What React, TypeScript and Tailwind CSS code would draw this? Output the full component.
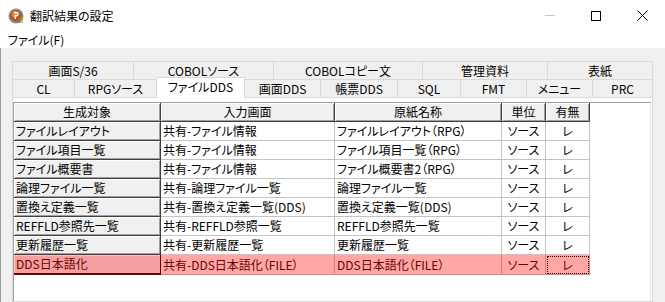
import React from 'react'

type Row = { target: string; input: string; name: string; unit: string; flag: string }

const rows: Row[] = [
  { target: 'ファイルレイアウト', input: '共有-ファイル情報', name: 'ファイルレイアウト（RPG）', unit: 'ソース', flag: 'レ' },
  { target: 'ファイル項目一覧', input: '共有-ファイル情報', name: 'ファイル項目一覧（RPG）', unit: 'ソース', flag: 'レ' },
  { target: 'ファイル概要書', input: '共有-ファイル情報', name: 'ファイル概要書2（RPG）', unit: 'ソース', flag: 'レ' },
  { target: '論理ファイル一覧', input: '共有-論理ファイル一覧', name: '論理ファイル一覧', unit: 'ソース', flag: 'レ' },
  { target: '置換え定義一覧', input: '共有-置換え定義一覧(DDS)', name: '置換え定義一覧(DDS)', unit: 'ソース', flag: 'レ' },
  { target: 'REFFLD参照先一覧', input: '共有-REFFLD参照一覧', name: 'REFFLD参照先一覧', unit: 'ソース', flag: 'レ' },
  { target: '更新履歴一覧', input: '共有-更新履歴一覧', name: '更新履歴一覧', unit: 'ソース', flag: 'レ' },
]

const selected: Row = { target: 'DDS日本語化', input: '共有-DDS日本語化（FILE）', name: 'DDS日本語化（FILE）', unit: 'ソース', flag: 'レ' }

// top row of tabs, widths measured from the dialog
const topTabs = [
  { label: '画面S/36', w: 'w-[121px]' },
  { label: 'COBOLソース', w: 'w-[140px]' },
  { label: 'COBOLコピー文', w: 'w-[149px]' },
  { label: '管理資料', w: 'w-[125px]' },
  { label: '表紙', w: 'w-[106px]' },
]

const bottomTabs = [
  { label: 'CL', w: 'w-[62px]' },
  { label: 'RPGソース', w: 'w-[82px]' },
  { label: 'ファイルDDS', w: 'w-[89px]', active: true },
  { label: '画面DDS', w: 'w-[75px]' },
  { label: '帳票DDS', w: 'w-[77px]' },
  { label: 'SQL', w: 'w-[63px]' },
  { label: 'FMT', w: 'w-[66px]' },
  { label: 'メニュー', w: 'w-[66px]' },
  { label: 'PRC', w: 'w-[61px]' },
]

const headCell = 'flex items-center justify-center bg-[#f0f0f0] border-r border-b border-[#404040] shadow-[inset_1px_1px_0_#ffffff,inset_-1px_-1px_0_#a0a0a0]'
const rowHead = 'flex items-center pl-[2px] bg-[#f0f0f0] border-r border-b border-[#404040] shadow-[inset_1px_1px_0_#ffffff,inset_-1px_-1px_0_#a0a0a0]'
const dataCell = 'flex items-center border-r border-b border-[#c4c4c4] bg-white'

function AppIcon() {
  return (
    <svg width="16" height="16" viewBox="0 0 16 16">
      <circle cx="8" cy="8" r="7.5" fill="#8a8a8a" />
      <circle cx="8" cy="8" r="5.8" fill="#b5562a" />
      <circle cx="7" cy="6.5" r="3" fill="#d98a4a" />
      <path d="M6 4.5h2.5a1.6 1.6 0 0 1 0 3.2H7.2V11" stroke="#fff" strokeWidth="1.3" fill="none" />
      <rect x="10" y="10" width="2.5" height="2.5" fill="#e84c1c" />
      <rect x="12.5" y="10" width="2.5" height="2.5" fill="#7cbb00" />
      <rect x="10" y="12.5" width="2.5" height="2.5" fill="#00a1f1" />
      <rect x="12.5" y="12.5" width="2.5" height="2.5" fill="#ffbb00" />
    </svg>
  )
}

export default function App() {
  return (
    <div className="w-[665px] h-[302px] overflow-hidden bg-white flex flex-col text-[12px] text-black [font-family:'Noto_Sans_CJK_JP','Noto_Sans',sans-serif] [font-feature-settings:'palt'] leading-none">
      {/* title bar */}
      <div className="h-[31px] flex items-center shrink-0">
        <div className="ml-[8px] mt-[1px]">
          <AppIcon />
        </div>
        <span className="ml-[6px]">翻訳結果の設定</span>
        <div className="ml-auto flex h-full">
          <div className="w-[46px] flex items-center justify-center">
            <div className="w-[10px] h-px bg-[#c8c8c8]" />
          </div>
          <div className="w-[46px] flex items-center justify-center">
            <div className="w-[10px] h-[10px] border border-black" />
          </div>
          <div className="w-[46px] flex items-center justify-center">
            <svg width="11" height="11" viewBox="0 0 11 11">
              <path d="M0.5 0.5L10.5 10.5M10.5 0.5L0.5 10.5" stroke="#000" strokeWidth="1" />
            </svg>
          </div>
        </div>
      </div>

      {/* menu bar */}
      <div className="h-[17px] flex items-center shrink-0 pl-[8px]">
        <span>ファイル(F)</span>
      </div>

      {/* client area */}
      <div className="flex-1 bg-[#f0f0f0] border-l border-[#9a9a9a] pt-[13px] pl-[11px] flex flex-col min-h-0">
        <div className="w-[641px] flex flex-col flex-1 min-h-0">
          {/* tab rows */}
          <div className="flex h-[18px]">
            {topTabs.map((t, i) => (
              <div
                key={t.label}
                className={`${t.w} h-full flex items-center justify-center border-t border-l border-[#d9d9d9] ${i === topTabs.length - 1 ? 'border-r' : ''}`}
              >
                {t.label}
              </div>
            ))}
          </div>
          <div className="flex h-[18px] items-end relative z-10">
            {bottomTabs.map((t, i) =>
              t.active ? (
                <div
                  key={t.label}
                  className={`${t.w} h-[21px] -mb-px flex items-center justify-center pb-[3px] bg-white border-t border-l border-r border-[#d9d9d9]`}
                >
                  {t.label}
                </div>
              ) : (
                <div
                  key={t.label}
                  className={`${t.w} h-full flex items-center justify-center border-t border-[#d9d9d9] ${bottomTabs[i - 1]?.active ? '' : 'border-l'} ${i === bottomTabs.length - 1 ? 'border-r' : ''}`}
                >
                  {t.label}
                </div>
              )
            )}
          </div>

          {/* tab page */}
          <div className="flex-1 bg-white border border-[#d9d9d9] pt-[4px] pr-px flex flex-col min-h-0">
            <div className="flex-1 bg-white border-l border-t border-[#a0a0a0] border-r border-r-[#e3e3e3] flex flex-col">
              {/* header */}
              <div className="flex h-[19px]">
                <div className={`${headCell} w-[147px]`}>生成対象</div>
                <div className={`${headCell} w-[174px]`}>入力画面</div>
                <div className={`${headCell} w-[167px]`}>原紙名称</div>
                <div className={`${headCell} w-[44px]`}>単位</div>
                <div className={`${headCell} w-[44px]`}>有無</div>
              </div>

              {rows.map((r) => (
                <div key={r.target} className="flex h-[19px]">
                  <div className={`${rowHead} w-[147px]`}>{r.target}</div>
                  <div className={`${dataCell} w-[174px] pl-[2px]`}>{r.input}</div>
                  <div className={`${dataCell} w-[167px] pl-[2px]`}>{r.name}</div>
                  <div className={`${dataCell} w-[44px] justify-center`}>{r.unit}</div>
                  <div className={`${dataCell} w-[44px] justify-center`}>{r.flag}</div>
                </div>
              ))}

              {/* selected row */}
              <div className="flex h-[20px] text-[#6e0000]">
                <div className="w-[147px] flex items-center pl-[2px] bg-[#f4a0a0] border-r border-b-2 border-[#6e0000] shadow-[inset_1px_1px_0_#f8c0c0]">
                  {selected.target}
                </div>
                <div className="w-[174px] flex items-center pl-[2px] bg-[#ffa6a6] border-r border-b border-[#d88080]">{selected.input}</div>
                <div className="w-[167px] flex items-center pl-[2px] bg-[#ffa6a6] border-r border-b border-[#d88080]">{selected.name}</div>
                <div className="w-[44px] flex items-center justify-center bg-[#ffa6a6] border-r border-b border-[#d88080]">{selected.unit}</div>
                <div className="w-[44px] flex items-center justify-center bg-[#ffa6a6] border-r border-b border-[#d88080] outline-1 outline-dotted outline-[#3a0000] -outline-offset-2">
                  {selected.flag}
                </div>
              </div>
            </div>
          </div>
        </div>
      </div>
    </div>
  )
}
